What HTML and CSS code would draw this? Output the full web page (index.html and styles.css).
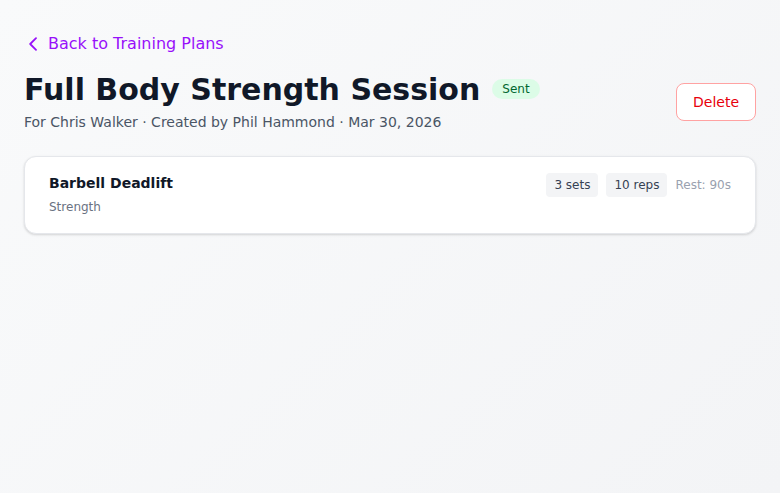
FILE: index.html
```html
<!DOCTYPE html>
<html>
<head>
<meta charset="utf-8">
<link rel="stylesheet" href="styles.css">
</head>
<body>
<div class="page">
  <a class="back" href="#">
    <svg class="chev" width="10" height="14" viewBox="0 0 10 14" fill="none" stroke="currentColor" stroke-width="1.8" stroke-linecap="round" stroke-linejoin="round"><path d="M8 1.2L2.2 7L8 12.8"/></svg>
    <span>Back to Training Plans</span>
  </a>
  <div class="header">
    <div class="titles">
      <div class="title-row">
        <h1 class="title">Full Body Strength Session</h1>
        <span class="badge">Sent</span>
      </div>
      <p class="meta">For Chris Walker · Created by Phil Hammond · Mar 30, 2026</p>
    </div>
    <button class="delete">Delete</button>
  </div>
  <div class="card">
    <div class="ex">
      <div class="ex-name">Barbell Deadlift</div>
      <div class="ex-cat">Strength</div>
    </div>
    <div class="chips">
      <span class="chip">3 sets</span>
      <span class="chip">10 reps</span>
      <span class="rest">Rest: 90s</span>
    </div>
  </div>
</div>
</body>
</html>
```
FILE: styles.css
```css
html, body { margin: 0; height: 100%; }
body {
  font-family: "DejaVu Sans", sans-serif;
  background: linear-gradient(135deg, #f9fafb 0%, #f3f4f6 100%);
  color: #101828;
}
.page { padding: 34px 24px; }
.back {
  display: inline-flex;
  align-items: center;
  gap: 10px;
  color: #9810fa;
  text-decoration: none;
  font-size: 16px;
  line-height: 20px;
  margin-left: 4px;
}
.chev { display: block; }
.header {
  display: flex;
  justify-content: space-between;
  align-items: center;
  margin-top: 17px;
}
.title-row { display: flex; align-items: center; gap: 12px; }
.title {
  margin: 0;
  font-size: 30px;
  line-height: 36px;
  font-weight: 700;
  color: #101828;
}
.badge {
  background: #dcfce7;
  color: #016630;
  font-size: 12px;
  line-height: 16px;
  padding: 2px 10px;
  border-radius: 9999px;
  margin-top: -2px;
}
.meta {
  margin: 4px 0 0;
  font-size: 14px;
  line-height: 20px;
  color: #4a5565;
}
.delete {
  font-family: inherit;
  font-size: 14px;
  line-height: 20px;
  color: #e7000b;
  background: #fff;
  border: 1px solid #ffa2a2;
  border-radius: 8px;
  padding: 8px 16px;
}
.card {
  margin-top: 24px;
  background: #fff;
  border: 1px solid #e5e7eb;
  border-radius: 12px;
  box-shadow: 0 1px 3px rgba(0,0,0,0.1), 0 1px 2px rgba(0,0,0,0.06);
  padding: 16px 24px 18px;
  display: flex;
  justify-content: space-between;
  align-items: flex-start;
}
.ex-name { font-size: 14px; line-height: 20px; font-weight: 700; color: #101828; }
.ex-cat { margin-top: 6px; font-size: 12px; line-height: 16px; color: #6a7282; }
.chips { display: flex; align-items: center; gap: 8px; }
.chip {
  background: #f3f4f6;
  color: #364153;
  font-size: 12px;
  line-height: 16px;
  padding: 4px 8px;
  border-radius: 4px;
}
.rest { font-size: 12px; line-height: 16px; color: #99a1af; }
```
